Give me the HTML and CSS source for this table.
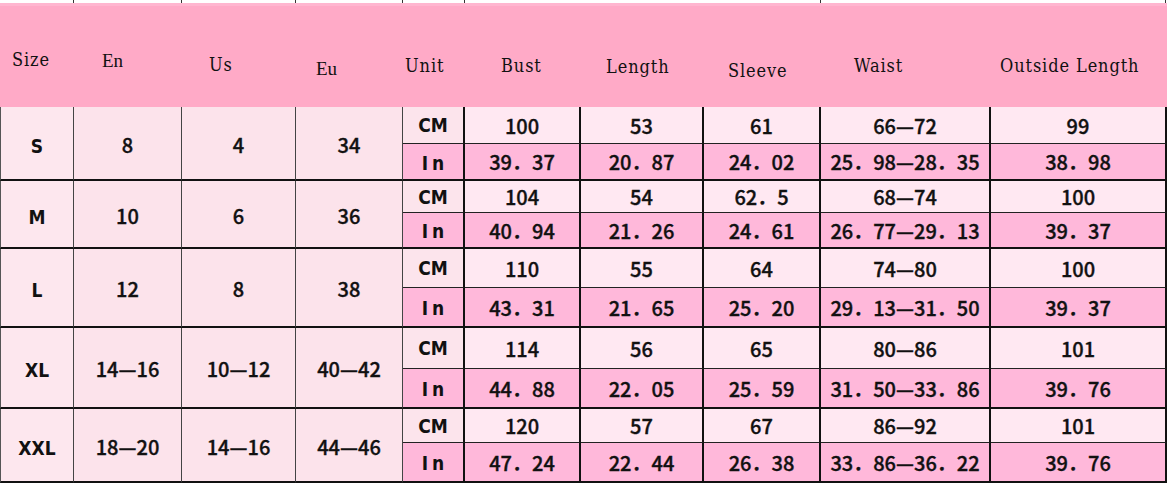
FILE: index.html
```html
<!DOCTYPE html>
<html lang="en">
<head>
<meta charset="utf-8">
<title>Size Chart</title>
<link rel="stylesheet" href="styles.css">
</head>
<body>
<div class="chart">
  <div class="strip">
    <span class="tick"></span><span class="tick"></span><span class="tick"></span><span class="tick"></span><span class="tick"></span><span class="tick"></span><span class="tick"></span>
  </div>
  <div class="head">
    <div class="h h-size">Size</div>
    <div class="h h-en serif">En</div>
    <div class="h h-us">Us</div>
    <div class="h h-eu serif">Eu</div>
    <div class="h h-unit">Unit</div>
    <div class="h h-bust">Bust</div>
    <div class="h h-length">Length</div>
    <div class="h h-sleeve">Sleeve</div>
    <div class="h h-waist">Waist</div>
    <div class="h h-outside">Outside Length</div>
  </div>
  <div class="grid">
    <div class="c lead size first">S</div>
    <div class="c lead">8</div>
    <div class="c lead">4</div>
    <div class="c lead">34</div>
    <div class="c unit-cm">CM</div>
    <div class="c cm">100</div><div class="c cm">53</div><div class="c cm">61</div><div class="c cm">66—72</div><div class="c cm">99</div>
    <div class="c unit-in">In</div>
    <div class="c in">39．37</div><div class="c in">20．87</div><div class="c in">24．02</div><div class="c in">25．98—28．35</div><div class="c in">38．98</div>

    <div class="c lead size">M</div>
    <div class="c lead">10</div>
    <div class="c lead">6</div>
    <div class="c lead">36</div>
    <div class="c unit-cm">CM</div>
    <div class="c cm">104</div><div class="c cm">54</div><div class="c cm">62．5</div><div class="c cm">68—74</div><div class="c cm">100</div>
    <div class="c unit-in">In</div>
    <div class="c in">40．94</div><div class="c in">21．26</div><div class="c in">24．61</div><div class="c in">26．77—29．13</div><div class="c in">39．37</div>

    <div class="c lead size">L</div>
    <div class="c lead">12</div>
    <div class="c lead">8</div>
    <div class="c lead">38</div>
    <div class="c unit-cm">CM</div>
    <div class="c cm">110</div><div class="c cm">55</div><div class="c cm">64</div><div class="c cm">74—80</div><div class="c cm">100</div>
    <div class="c unit-in">In</div>
    <div class="c in">43．31</div><div class="c in">21．65</div><div class="c in">25．20</div><div class="c in">29．13—31．50</div><div class="c in">39．37</div>

    <div class="c lead size">XL</div>
    <div class="c lead">14—16</div>
    <div class="c lead">10—12</div>
    <div class="c lead">40—42</div>
    <div class="c unit-cm">CM</div>
    <div class="c cm">114</div><div class="c cm">56</div><div class="c cm">65</div><div class="c cm">80—86</div><div class="c cm">101</div>
    <div class="c unit-in">In</div>
    <div class="c in">44．88</div><div class="c in">22．05</div><div class="c in">25．59</div><div class="c in">31．50—33．86</div><div class="c in">39．76</div>

    <div class="c lead size">XXL</div>
    <div class="c lead">18—20</div>
    <div class="c lead">14—16</div>
    <div class="c lead">44—46</div>
    <div class="c unit-cm">CM</div>
    <div class="c cm">120</div><div class="c cm">57</div><div class="c cm">67</div><div class="c cm">86—92</div><div class="c cm">101</div>
    <div class="c unit-in">In</div>
    <div class="c in">47．24</div><div class="c in">22．44</div><div class="c in">26．38</div><div class="c in">33．86—36．22</div><div class="c in">39．76</div>
  </div>
</div>
</body>
</html>
```

FILE: styles.css
```css
* { box-sizing: border-box; }
html, body { margin: 0; padding: 0; background: #ffffff; }

.chart {
  width: 1167px;
}

.strip {
  height: 3px;
  display: grid;
  grid-template-columns: 74px 108px 114px 107px 62px 356px 345px;
  background: #ffffff;
}
.tick { border-right: 1px solid #333; }

.head {
  height: 104px;
  background: #ffaac7;
  border-top: 3px solid #ffb6d0;
  display: grid;
  grid-template-columns: 74px 108px 114px 107px 62px 116px 123px 117px 170px 176px;
  font-family: "DejaVu Serif Condensed", "DejaVu Serif", serif;
  font-stretch: condensed;
  font-size: 18px;
  line-height: 18px;
  letter-spacing: 0.9px;
  color: #111;
  white-space: nowrap;
}
.h { padding-top: 51px; }
.serif { font-family: "Liberation Serif", serif; font-size: 19px; line-height: 19px; font-stretch: normal; letter-spacing: 0; }
.h-size { padding-left: 12px; padding-top: 45px; }
.h-en { padding-left: 28px; padding-top: 45px; }
.h-us { padding-left: 27px; padding-top: 50px; }
.h-eu { padding-left: 20px; padding-top: 53px; }
.h-unit { padding-left: 2px; padding-top: 51px; }
.h-bust { padding-left: 36px; padding-top: 51px; }
.h-length { padding-left: 25px; padding-top: 52px; }
.h-sleeve { padding-left: 24px; padding-top: 56px; }
.h-waist { padding-left: 33px; padding-top: 51px; }
.h-outside { padding-left: 9px; padding-top: 51px; }

.grid {
  display: grid;
  grid-template-columns: 74px 108px 114px 107px 62px 116px 123px 117px 170px 176px;
  grid-template-rows: 37px 37px 32px 36px 39px 40px 41px 40px 34px 40px;
  font-family: "Noto Sans CJK SC", "Noto Sans", sans-serif;
  font-size: 20px;
  font-weight: 500;
  color: #111;
  -webkit-text-stroke: 0.35px #111;
}

.c {
  display: flex;
  align-items: center;
  justify-content: center;
  white-space: nowrap;
  line-height: 1;
  padding-top: 1px;
}

.lead {
  grid-row: span 2;
  background: #fce3eb;
  border-right: 1px solid #444;
  border-bottom: 2px solid #111;
  padding-top: 3px;
}
.size {
  border-left: 1px solid #555;
  background: #fde7ee;
  font-family: "DejaVu Sans Condensed", "DejaVu Sans", sans-serif;
  font-stretch: condensed;
  font-weight: 700;
  font-size: 19px;
  -webkit-text-stroke: 0;
  padding-top: 6px;
}

.unit-cm, .unit-in {
  font-family: "DejaVu Sans Condensed", "DejaVu Sans", sans-serif;
  font-stretch: condensed;
  font-weight: 700;
  font-size: 19px;
  border-right: 2px solid #111;
  -webkit-text-stroke: 0;
}
.unit-cm {
  background: #fce4ec;
  border-bottom: 1px solid #222;
}
.unit-in {
  background: #ffb8da;
  border-bottom: 2px solid #111;
  letter-spacing: 4px;
  padding-left: 4px;
  padding-top: 3px;
}

.cm {
  background: #ffe8f2;
  border-right: 2px solid #111;
  border-bottom: 1px solid #222;
}
.in {
  background: #ffb8da;
  border-right: 2px solid #111;
  border-bottom: 2px solid #111;
}
```
